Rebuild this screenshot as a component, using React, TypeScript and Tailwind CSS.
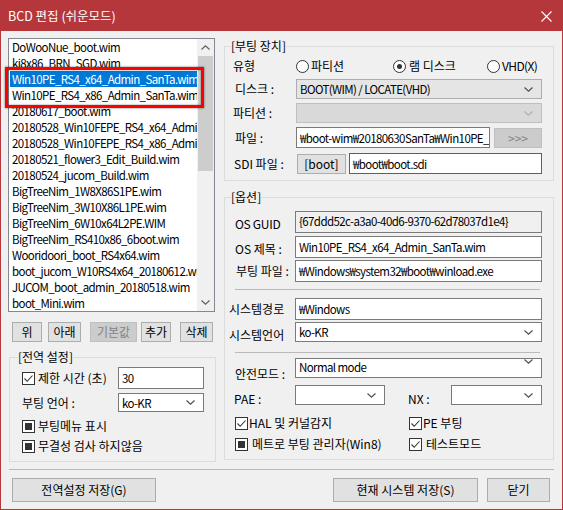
import React from "react";

const files = [
  "DoWooNue_boot.wim",
  "ki8x86_BRN_SGD.wim",
  "Win10PE_RS4_x64_Admin_SanTa.wim",
  "Win10PE_RS4_x86_Admin_SanTa.wim",
  "20180617_boot.wim",
  "20180528_Win10FEPE_RS4_x64_Admin_SanTa.wim",
  "20180528_Win10FEPE_RS4_x86_Admin_SanTa.wim",
  "20180521_flower3_Edit_Build.wim",
  "20180524_jucom_Build.wim",
  "BigTreeNim_1W8X86S1PE.wim",
  "BigTreeNim_3W10X86L1PE.wim",
  "BigTreeNim_6W10x64L2PE.WIM",
  "BigTreeNim_RS410x86_6boot.wim",
  "Wooridoori_boot_RS4x64.wim",
  "boot_jucom_W10RS4x64_20180612.wim",
  "JUCOM_boot_admin_20180518.wim",
  "boot_Mini.wim",
];

function Chevron({ up = false, color = "#505050" }: { up?: boolean; color?: string }) {
  return (
    <svg width="9" height="5" viewBox="0 0 9 5" aria-hidden="true">
      <path d={up ? "M0.5 4.5L4.5 0.8L8.5 4.5" : "M0.5 0.5L4.5 4.2L8.5 0.5"} fill="none" stroke={color} strokeWidth="1.2" />
    </svg>
  );
}

function Check({ state }: { state: "checked" | "filled" }) {
  return (
    <span className="flex h-[13px] w-[13px] shrink-0 items-center justify-center border border-[#333333] bg-white">
      {state === "checked" ? (
        <svg width="11" height="11" viewBox="0 0 11 11" aria-hidden="true">
          <path d="M1.5 5.5L4.2 8.3L9.5 2.5" fill="none" stroke="#333333" strokeWidth="1.1" />
        </svg>
      ) : (
        <span className="h-[7px] w-[7px] bg-[#333333]" />
      )}
    </span>
  );
}

function Radio({ on = false }: { on?: boolean }) {
  return (
    <span className="flex h-[13px] w-[13px] shrink-0 items-center justify-center rounded-full border border-[#333333] bg-white">
      {on && <span className="h-[5px] w-[5px] rounded-full bg-[#333333]" />}
    </span>
  );
}

function Combo({
  value = "",
  kind = "edit",
  className,
}: {
  value?: string;
  kind?: "edit" | "list" | "off";
  className: string;
}) {
  const look =
    kind === "edit"
      ? "border-[#7a7a7a] bg-white"
      : kind === "list"
        ? "border-[#acacac] bg-[#e5e5e5]"
        : "border-[#bfbfbf] bg-[#d9d9d9]";
  return (
    <div className={`flex items-center justify-between border pl-[3px] pr-[8px] ${look} ${className}`}>
      <span className="whitespace-nowrap text-[11.5px] tracking-[-0.6px]">{value}</span>
      <Chevron color={kind === "off" ? "#b0b0b0" : "#505050"} />
    </div>
  );
}

function Field({ value, className, tone = "plain" }: { value: string; className: string; tone?: "plain" | "ro" | "focus" }) {
  const look =
    tone === "ro" ? "border-[#7a7a7a] bg-[#f0f0f0]" : tone === "focus" ? "border-[#0078d7] bg-white" : "border-[#7a7a7a] bg-white";
  return (
    <div
      className={`flex items-center overflow-hidden whitespace-nowrap border pl-[3px] text-[11.5px] tracking-[-0.6px] ${look} ${className}`}
    >
      {value}
    </div>
  );
}

function Btn({ label, className, off = false }: { label: string; className: string; off?: boolean }) {
  return (
    <button
      className={`flex items-center justify-center border ${
        off ? "border-[#bfbfbf] bg-[#cccccc] text-[#838383]" : "border-[#adadad] bg-[#e1e1e1] text-black"
      } ${className}`}
    >
      {label}
    </button>
  );
}

export default function App() {
  return (
    <div className="flex h-[510px] w-[563px] flex-col border border-[#b5373b] bg-[#f0f0f0] font-['Noto_Sans_CJK_KR','Noto_Sans',sans-serif] text-[12px] leading-[16px] text-black">
      {/* title bar */}
      <div className="flex h-[30px] shrink-0 items-center justify-between bg-[#b5373b] pl-[7px] text-white">
        <span className="text-[12.5px]">BCD 편집 (쉬운모드)</span>
        <svg className="mr-[10px]" width="11" height="11" viewBox="0 0 11 11" aria-hidden="true">
          <path d="M0.5 0.5L10.5 10.5M10.5 0.5L0.5 10.5" stroke="#ffffff" strokeWidth="1.1" />
        </svg>
      </div>

      <div className="flex flex-1 flex-col pl-[7px]">
        <div className="flex items-start">
          {/* left column */}
          <div className="flex w-[209px] flex-col">
            <div className="relative mt-[7px] flex h-[274px] w-[207px] border border-[#828790] bg-white">
              <div className="flex-1 overflow-hidden">
                {files.map((f, i) => (
                  <div
                    key={f}
                    className={`ml-px h-[16px] overflow-hidden whitespace-nowrap pl-[2px] text-[11.5px] tracking-[-0.6px] ${
                      i === 2 ? "bg-[#0078d7] text-white" : ""
                    }`}
                  >
                    {f}
                  </div>
                ))}
              </div>
              <div className="flex w-[17px] flex-col bg-[#f0f0f0]">
                <div className="flex h-[17px] items-center justify-center">
                  <Chevron up color="#606060" />
                </div>
                <div className="mx-px h-[115px] bg-[#cdcdcd]" />
                <div className="flex-1" />
                <div className="flex h-[17px] items-center justify-center">
                  <Chevron color="#606060" />
                </div>
              </div>
              <div className="absolute left-[-4px] top-[28px] h-[41px] w-[199px] border-[3px] border-[#ff0000] shadow-[0_0_2px_rgba(0,0,0,0.55),inset_0_0_2px_rgba(0,0,0,0.55)]" />
            </div>

            <div className="mt-[10px] flex h-[20px]">
              <Btn label="위" className="ml-[4px] w-[30px]" />
              <Btn label="아래" className="ml-[6px] w-[33px]" />
              <Btn label="기본값" off className="ml-[9px] w-[47px]" />
              <Btn label="추가" className="ml-[4px] w-[30px]" />
              <Btn label="삭제" className="ml-[9px] w-[33px]" />
            </div>

            <fieldset className="ml-px mt-[7px] w-[207px] border border-[#dcdcdc] pb-[7px]">
              <legend className="ml-[8px]">[전역 설정]</legend>
              <div className="mt-[2px] flex h-[22px] items-center">
                <div className="ml-[12px] flex w-[96px] items-center gap-[3px]">
                  <Check state="checked" />
                  <span>제한 시간 (초)</span>
                </div>
                <Field value="30" className="h-[22px] w-[86px] items-start pt-[2px]" />
              </div>
              <div className="mt-[4px] flex h-[19px] items-center">
                <span className="ml-[12px] w-[96px]">부팅 언어 :</span>
                <Combo value="ko-KR" className="h-[19px] w-[86px]" />
              </div>
              <div className="ml-[12px] mt-[6px] flex h-[16px] items-center gap-[3px]">
                <Check state="filled" />
                <span>부팅메뉴 표시</span>
              </div>
              <div className="ml-[12px] mt-[4px] flex h-[16px] items-center gap-[3px]">
                <Check state="filled" />
                <span>무결성 검사 하지않음</span>
              </div>
            </fieldset>
          </div>

          {/* right column */}
          <div className="ml-[7px] flex w-[330px] flex-col">
            <fieldset className="mt-[7px] border border-[#dcdcdc] pb-[6px]">
              <legend className="ml-[6px]">[부팅 장치]</legend>
              <div className="mt-[2px] flex h-[20px] items-center pl-[8px]">
                <span className="w-[63px]">유형</span>
                <div className="flex w-[97px] items-center gap-[2px]">
                  <Radio />
                  <span>파티션</span>
                </div>
                <div className="flex w-[94px] items-center gap-[3px]">
                  <Radio on />
                  <span>램 디스크</span>
                </div>
                <div className="flex items-center gap-[2px]">
                  <Radio />
                  <span className="tracking-[-0.6px]">VHD(X)</span>
                </div>
              </div>
              <div className="mt-[3px] flex h-[20px] items-center pl-[10px]">
                <span className="w-[61px]">디스크 :</span>
                <Combo kind="list" value="BOOT(WIM) / LOCATE(VHD)" className="h-[20px] w-[246px]" />
              </div>
              <div className="mt-[4px] flex h-[20px] items-center pl-[8px]">
                <span className="w-[63px]">파티션 :</span>
                <Combo kind="off" className="h-[20px] w-[246px]" />
              </div>
              <div className="mt-[4px] flex h-[21px] items-center pl-[10px]">
                <span className="w-[61px]">파일 :</span>
                <Field value="₩boot-wim₩20180630SanTa₩Win10PE_RS4_x64_Admin_SanTa.wim" className="h-[21px] w-[194px]" />
                <Btn label=">>>" off className="ml-[4px] h-[20px] w-[48px]" />
              </div>
              <div className="mt-[5px] flex h-[21px] items-center pl-[9px]">
                <span className="w-[63px]">SDI 파일 :</span>
                <Btn label="[boot]" className="h-[20px] w-[49px]" />
                <Field tone="focus" value="₩boot₩boot.sdi" className="ml-[3px] h-[21px] w-[193px]" />
              </div>
            </fieldset>

            <fieldset className="mt-[8px] border border-[#dcdcdc] pb-[7px]">
              <legend className="ml-[6px]">[옵션]</legend>
              <div className="mt-[6px] flex h-[22px] items-center pl-[10px]">
                <span className="w-[60px] pt-[4px] tracking-[-0.3px]">OS GUID</span>
                <Field tone="ro" value="{67ddd52c-a3a0-40d6-9370-62d78037d1e4}" className="h-[22px] w-[247px] items-start pl-[2px] pt-[1px]" />
              </div>
              <div className="mt-[3px] flex h-[22px] items-center pl-[10px]">
                <span className="w-[60px] pt-[3px]">OS 제목 :</span>
                <Field value="Win10PE_RS4_x64_Admin_SanTa.wim" className="h-[22px] w-[247px]" />
              </div>
              <div className="mt-[2px] flex h-[22px] items-center pl-[11px]">
                <span className="w-[59px]">부팅 파일 :</span>
                <Field value="₩Windows₩system32₩boot₩winload.exe" className="h-[22px] w-[247px]" />
              </div>
              <div className="ml-[10px] mt-[7px] h-px w-[305px] bg-[#b9b9b9]" />
              <div className="mt-[8px] flex h-[22px] items-center pl-[4px]">
                <span className="w-[66px]">시스템경로</span>
                <Field value="₩Windows" className="h-[22px] w-[247px]" />
              </div>
              <div className="mt-[2px] flex h-[20px] items-center pl-[4px]">
                <span className="w-[66px] pt-[6px]">시스템언어</span>
                <Combo value="ko-KR" className="h-[20px] w-[247px]" />
              </div>
              <div className="ml-[10px] mt-[10px] h-px w-[305px] bg-[#b9b9b9]" />
              <div className="mt-[5px] flex h-[20px] items-center pl-[10px]">
                <span className="w-[60px] pt-[12px]">안전모드 :</span>
                <Combo value="Normal mode" className="h-[20px] w-[247px] items-start" />
              </div>
              <div className="mt-[7px] flex h-[20px] items-center pl-[9px]">
                <span className="w-[61px] pt-[8px]">PAE :</span>
                <Combo className="h-[20px] w-[90px]" />
                <span className="ml-[23px] w-[43px] pt-[8px]">NX :</span>
                <Combo className="h-[20px] w-[91px]" />
              </div>
              <div className="mt-[10px] flex h-[16px] items-center pl-[10px]">
                <div className="flex w-[174px] items-center gap-px">
                  <Check state="checked" />
                  <span>HAL 및 커널감지</span>
                </div>
                <div className="flex items-center gap-px">
                  <Check state="checked" />
                  <span>PE 부팅</span>
                </div>
              </div>
              <div className="mt-[5px] flex h-[16px] items-center pl-[10px]">
                <div className="flex w-[174px] items-center gap-[4px]">
                  <Check state="filled" />
                  <span>메트로 부팅 관리자(Win8)</span>
                </div>
                <div className="flex items-center gap-[4px]">
                  <Check state="checked" />
                  <span>테스트모드</span>
                </div>
              </div>
            </fieldset>
          </div>
        </div>

        <div className="ml-px mt-[7px] h-px w-[545px] bg-[#b9b9b9]" />

        <div className="mt-[8px] flex h-[24px]">
          <Btn label="전역설정 저장(G)" className="ml-[4px] w-[144px]" />
          <Btn label="현재 시스템 저장(S)" className="ml-[177px] w-[145px]" />
          <Btn label="닫기" className="ml-[9px] w-[63px]" />
        </div>
      </div>
    </div>
  );
}
